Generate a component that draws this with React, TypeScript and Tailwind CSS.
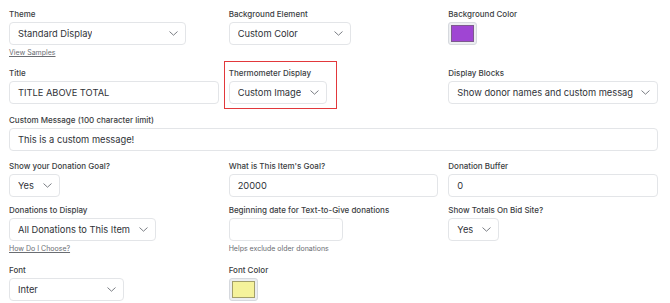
import React from "react";

const Chevron = () => (
  <svg width="9" height="5" viewBox="0 0 9 5" fill="none" className="shrink-0">
    <path d="M0.8 0.8 L4.5 4.2 L8.2 0.8" stroke="#6b6f76" strokeWidth="0.9" strokeLinecap="round" strokeLinejoin="round" />
  </svg>
);

function Label({ children }: { children: React.ReactNode }) {
  return <div className="text-[8px] leading-[10px] font-medium text-[#3b3d42] whitespace-nowrap">{children}</div>;
}

function Select({ value, w }: { value: string; w: string }) {
  return (
    <div className={`mt-[3px] h-[23px] ${w} flex items-center justify-between gap-[8px] rounded-[4px] border border-[#e3e5e8] bg-white pl-[8px] pr-[7px]`}>
      <span className="text-[9.3px] text-[#2f3237] whitespace-nowrap overflow-hidden">{value}</span>
      <Chevron />
    </div>
  );
}

function Input({ value, w = "w-full" }: { value?: string; w?: string }) {
  return (
    <div className={`mt-[3px] h-[23px] ${w} flex items-center rounded-[4px] border border-[#e3e5e8] bg-white px-[8px]`}>
      <span className="text-[9.3px] text-[#2f3237] whitespace-nowrap">{value}</span>
    </div>
  );
}

function Swatch({ color, border }: { color: string; border: string }) {
  return (
    <div className="mt-[3px] h-[23px] w-[29px] rounded-[3px] border border-[#d6d9de] bg-[#eceef1] p-[2px]">
      <div className={`h-full w-full border ${border} ${color}`} />
    </div>
  );
}

function Small({ children, link }: { children: React.ReactNode; link?: boolean }) {
  return (
    <div className={`mt-[3px] text-[7px] leading-[10px] text-[#6a6d72] whitespace-nowrap ${link ? "underline" : ""}`}>
      {children}
    </div>
  );
}

export default function App() {
  return (
    <div className="w-[670px] h-[303px] overflow-hidden bg-white pl-[9px] pr-[12px] pt-[9px]" style={{ fontFamily: "Inter, 'Noto Sans', sans-serif" }}>
      {/* row 1 */}
      <div className="grid grid-cols-3 gap-x-[10px]">
        <div>
          <Label>Theme</Label>
          <Select value="Standard Display" w="w-[177px]" />
          <Small link>View Samples</Small>
        </div>
        <div>
          <Label>Background Element</Label>
          <Select value="Custom Color" w="w-[122px]" />
        </div>
        <div>
          <Label>Background Color</Label>
          <Swatch color="bg-[#9f45d3]" border="border-[#7d5a8e]" />
        </div>
      </div>

      {/* row 2 */}
      <div className="mt-[10px] grid grid-cols-3 gap-x-[10px]">
        <div>
          <Label>Title</Label>
          <Input value="TITLE ABOVE TOTAL" />
        </div>
        <div>
          <div className="relative w-fit">
            <div className="absolute -left-[5px] -top-[7px] -right-[10px] -bottom-[5px] border-[1.5px] border-[#e2383b]" />
            <Label>Thermometer Display</Label>
            <Select value="Custom Image" w="w-[98px]" />
          </div>
        </div>
        <div>
          <Label>Display Blocks</Label>
          <Select value="Show donor names and custom message" w="w-full" />
        </div>
      </div>

      {/* row 3 */}
      <div className="mt-[11px]">
        <Label>Custom Message (100 character limit)</Label>
        <Input value="This is a custom message!" />
      </div>

      {/* row 4 */}
      <div className="mt-[10px] grid grid-cols-3 gap-x-[10px]">
        <div>
          <Label>Show your Donation Goal?</Label>
          <Select value="Yes" w="w-[51px]" />
        </div>
        <div>
          <Label>What is This Item's Goal?</Label>
          <Input value="20000" />
        </div>
        <div>
          <Label>Donation Buffer</Label>
          <Input value="0" />
        </div>
      </div>

      {/* row 5 */}
      <div className="mt-[8px] grid grid-cols-3 gap-x-[10px]">
        <div>
          <Label>Donations to Display</Label>
          <Select value="All Donations to This Item" w="w-[147px]" />
          <Small link>How Do I Choose?</Small>
        </div>
        <div>
          <Label>Beginning date for Text-to-Give donations</Label>
          <Input w="w-[114px]" />
          <Small>Helps exclude older donations</Small>
        </div>
        <div>
          <Label>Show Totals On Bid Site?</Label>
          <Select value="Yes" w="w-[51px]" />
        </div>
      </div>

      {/* row 6 */}
      <div className="mt-[11px] grid grid-cols-3 gap-x-[10px]">
        <div>
          <Label>Font</Label>
          <Select value="Inter" w="w-[115px]" />
        </div>
        <div>
          <Label>Font Color</Label>
          <Swatch color="bg-[#f5f29b]" border="border-[#a39f6a]" />
        </div>
        <div />
      </div>
    </div>
  );
}
